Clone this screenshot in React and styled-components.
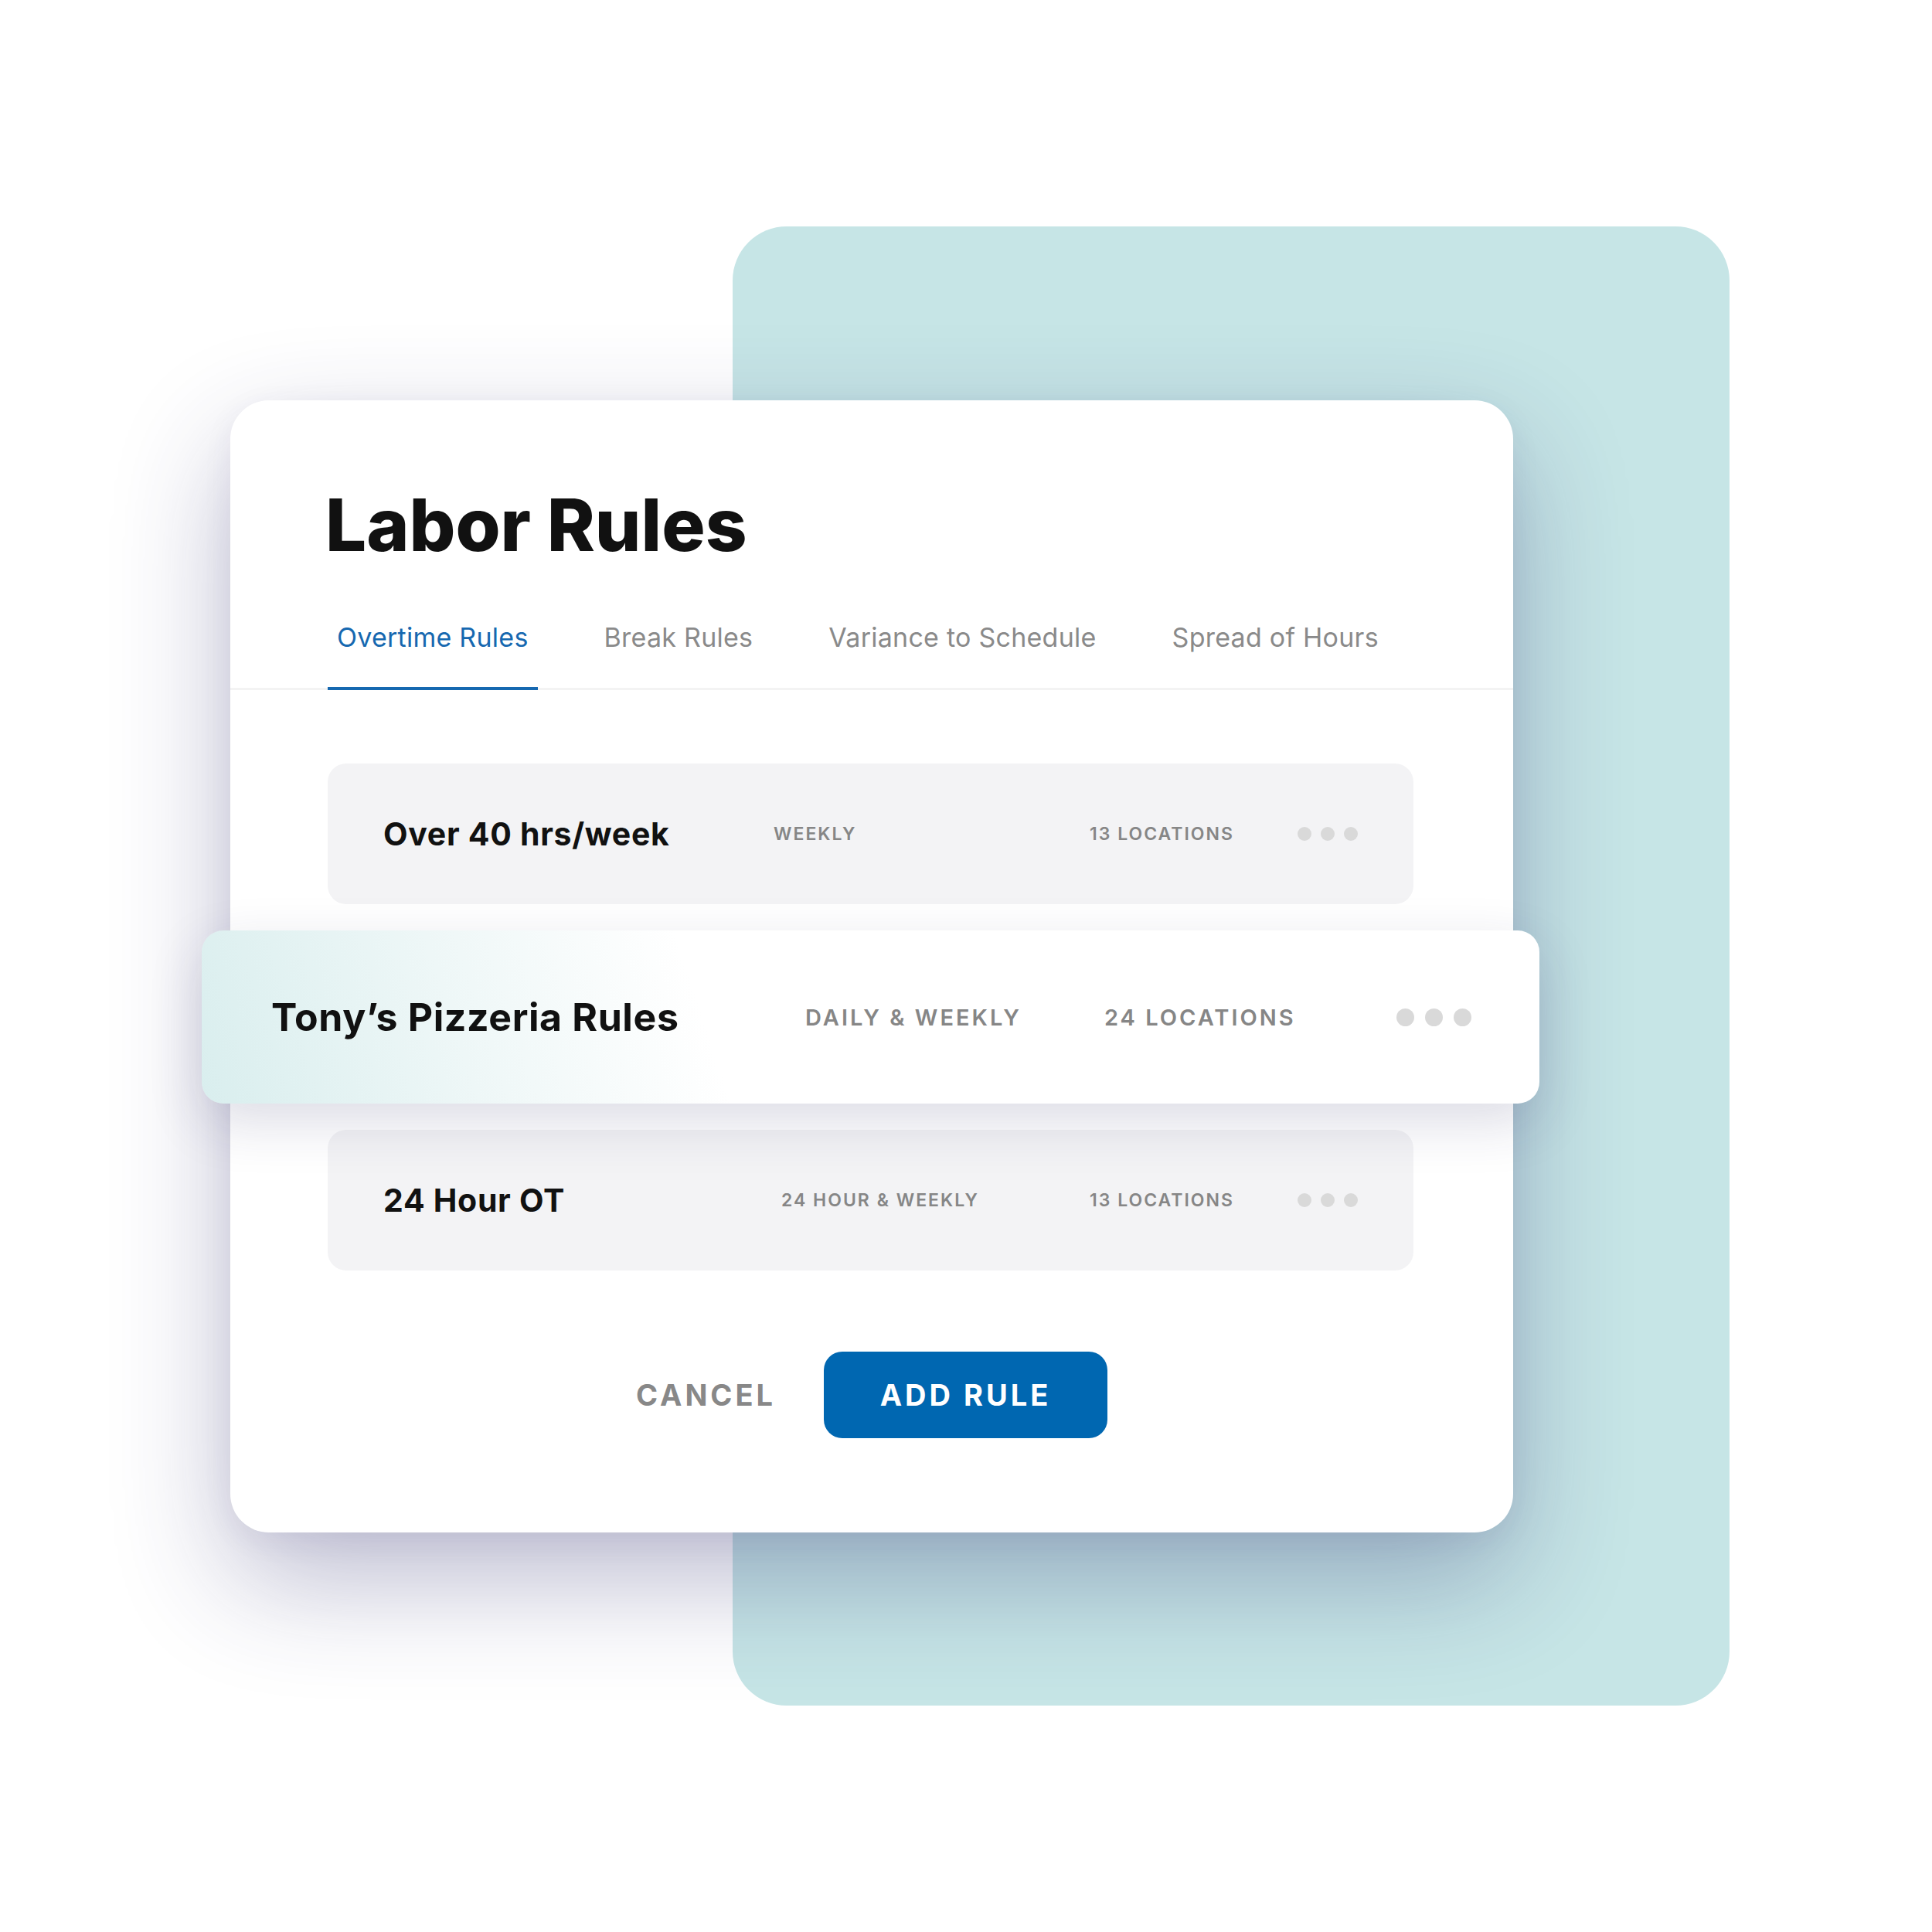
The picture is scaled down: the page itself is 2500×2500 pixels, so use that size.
import React from 'react'
import styled, { createGlobalStyle } from 'styled-components'

const GlobalStyle = createGlobalStyle`
  html, body {
    margin: 0;
    padding: 0;
    background: #ffffff;
  }
  body {
    font-family: 'Inter', 'Noto Sans', sans-serif;
    -webkit-font-smoothing: antialiased;
  }
`

const Stage = styled.div`
  width: 2500px;
  height: 2500px;
  display: grid;
  grid-template-columns: 1fr;
  grid-template-rows: 1fr;
  overflow: hidden;
`

const Backdrop = styled.div`
  grid-area: 1 / 1;
  align-self: start;
  justify-self: start;
  margin: 293px 0 0 948px;
  width: 1290px;
  height: 1914px;
  border-radius: 70px;
  background: #c6e5e6;
`

const Card = styled.section`
  grid-area: 1 / 1;
  align-self: start;
  justify-self: start;
  margin: 518px 0 0 298px;
  width: 1660px;
  box-sizing: border-box;
  padding-bottom: 122px;
  background: #ffffff;
  border-radius: 50px;
  box-shadow: 0 60px 150px rgba(45, 42, 110, 0.32), 0 10px 40px rgba(45, 42, 110, 0.06);
  display: flex;
  flex-direction: column;
`

const Title = styled.h1`
  margin: 114px 0 82px 123px;
  font-size: 94px;
  line-height: 1;
  font-weight: 800;
  letter-spacing: 0;
  color: #111111;
`

const TabBar = styled.nav`
  display: flex;
  gap: 74px;
  padding-left: 126px;
  border-bottom: 3px solid #f3f3f3;
`

const Tab = styled.div`
  padding: 0 12px 47px;
  margin-bottom: -3px;
  font-size: 34px;
  line-height: 1;
  font-weight: 400;
  letter-spacing: 0.25px;
  color: ${p => (p.$active ? '#1668b0' : '#8a8a8a')};
  border-bottom: 4px solid ${p => (p.$active ? '#1668b0' : 'transparent')};
`

const RuleList = styled.div`
  display: flex;
  flex-direction: column;
  gap: 34px;
  margin: 95px 129px 0 126px;
`

const Row = styled.div`
  display: grid;
  align-items: center;
  box-sizing: border-box;
  grid-template-columns: ${p => (p.$featured ? '691px 387px 378px auto' : '505px 409px 269px auto')};
  height: ${p => (p.$featured ? '224px' : '182px')};
  padding: ${p => (p.$featured ? '0 88px 0 90px' : '0 70px 0 72px')};
  margin: ${p => (p.$featured ? '0 -163px' : '0')};
  border-radius: ${p => (p.$featured ? '28px' : '24px')};
  background: ${p =>
    p.$featured
      ? 'linear-gradient(72deg, #d9eeee 0%, #eef7f7 20%, #ffffff 38%)'
      : '#f3f3f5'};
  box-shadow: ${p => (p.$featured ? '0 24px 70px rgba(40, 40, 95, 0.16)' : 'none')};
  position: ${p => (p.$featured ? 'relative' : 'static')};
  z-index: ${p => (p.$featured ? 1 : 0)};
`

const RuleName = styled.div`
  font-size: ${p => (p.$featured ? '50px' : '41px')};
  font-weight: 700;
  letter-spacing: ${p => (p.$featured ? '0.6px' : '0.7px')};
  color: #111111;
  white-space: nowrap;
`

const Meta = styled.div`
  font-size: ${p => (p.$featured ? '29px' : '23px')};
  font-weight: 600;
  letter-spacing: ${p => (p.$featured ? '3px' : '2px')};
  color: #868686;
  white-space: nowrap;
  padding-left: ${p => (p.$indent ? '10px' : '0')};
`

const Dots = styled.div`
  display: flex;
  gap: ${p => (p.$featured ? '14px' : '12px')};
  justify-self: start;
`

const Dot = styled.span`
  width: ${p => (p.$featured ? '23px' : '18px')};
  height: ${p => (p.$featured ? '23px' : '18px')};
  border-radius: 50%;
  background: #d9d9d9;
`

const Actions = styled.div`
  display: flex;
  justify-content: center;
  align-items: center;
  gap: 62px;
  margin-top: 105px;
`

const TextButton = styled.button`
  border: none;
  background: none;
  padding: 0;
  font-family: inherit;
  font-size: 38px;
  font-weight: 700;
  letter-spacing: 4px;
  color: #888888;
  cursor: pointer;
`

const PrimaryButton = styled.button`
  width: 367px;
  height: 112px;
  border: none;
  border-radius: 24px;
  background: #0067b1;
  font-family: inherit;
  font-size: 38px;
  font-weight: 700;
  letter-spacing: 4px;
  color: #ffffff;
  cursor: pointer;
`

const tabs = ['Overtime Rules', 'Break Rules', 'Variance to Schedule', 'Spread of Hours']

const rules = [
  { name: 'Over 40 hrs/week', period: 'WEEKLY', locations: '13 LOCATIONS' },
  { name: 'Tony’s Pizzeria Rules', period: 'DAILY & WEEKLY', locations: '24 LOCATIONS', featured: true },
  { name: '24 Hour OT', period: '24 HOUR & WEEKLY', locations: '13 LOCATIONS', indent: true },
]

const App = () => {
  return (
    <>
      <GlobalStyle />
      <Stage>
        <Backdrop />
        <Card>
          <Title>Labor Rules</Title>
          <TabBar>
            {tabs.map((t, i) => (
              <Tab key={t} $active={i === 0}>{t}</Tab>
            ))}
          </TabBar>
          <RuleList>
            {rules.map(r => (
              <Row key={r.name} $featured={r.featured}>
                <RuleName $featured={r.featured}>{r.name}</RuleName>
                <Meta $featured={r.featured} $indent={r.indent}>{r.period}</Meta>
                <Meta $featured={r.featured}>{r.locations}</Meta>
                <Dots $featured={r.featured}>
                  <Dot $featured={r.featured} />
                  <Dot $featured={r.featured} />
                  <Dot $featured={r.featured} />
                </Dots>
              </Row>
            ))}
          </RuleList>
          <Actions>
            <TextButton>CANCEL</TextButton>
            <PrimaryButton>ADD RULE</PrimaryButton>
          </Actions>
        </Card>
      </Stage>
    </>
  )
}

export default App
